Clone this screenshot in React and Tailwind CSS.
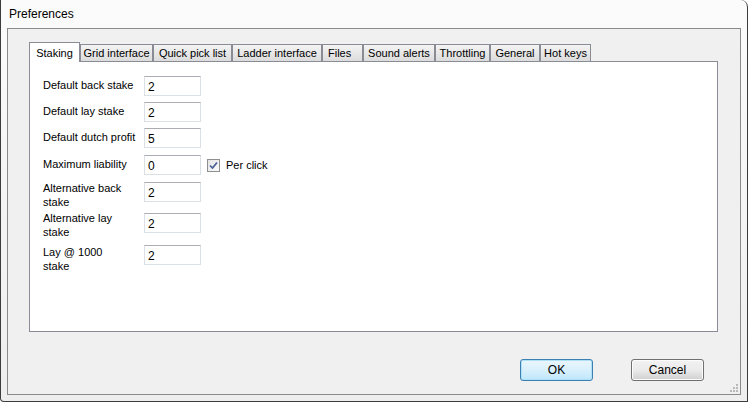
import React from 'react';

const font = { fontFamily: '"Liberation Sans", Arial, sans-serif' };

const tabs = [
  { label: 'Staking', w: 'w-[51px]', active: true },
  { label: 'Grid interface', w: 'w-[73px]' },
  { label: 'Quick pick list', w: 'w-[79px]' },
  { label: 'Ladder interface', w: 'w-[90px]' },
  { label: 'Files', w: 'w-[41px]', left: true },
  { label: 'Sound alerts', w: 'w-[72px]' },
  { label: 'Throttling', w: 'w-[55px]' },
  { label: 'General', w: 'w-[50px]' },
  { label: 'Hot keys', w: 'w-[51px]' },
];

const TabStrip = () => (
  <div className="flex items-end h-[19px]">
    {tabs.map((t) =>
      t.active ? (
        <div
          key={t.label}
          className={`${t.w} h-[20px] -mb-px relative z-10 bg-white border border-b-0 border-[#898c95] text-[11px] leading-[11px] pt-[5px] text-center shrink-0`}
        >
          {t.label}
        </div>
      ) : (
        <div
          key={t.label}
          className={`${t.w} h-[17px] border border-b-0 border-[#898c95] bg-gradient-to-b from-[#f4f4f4] to-[#dcdcdc] text-[11px] leading-[11px] pt-[3px] shrink-0 ${t.left ? 'text-left pl-[5px]' : 'text-center'}`}
        >
          {t.label}
        </div>
      )
    )}
  </div>
);

const Field = ({ value }) => (
  <div className="w-[57px] h-[20px] bg-white border border-[#dbdfe6] border-t-[#abadb3] text-[12px] leading-[12px] pl-[3px] pt-[4px] shrink-0">
    {value}
  </div>
);

// rows keep the height of the text box; two-line labels hang below it
const Row = ({ label, value, className = '', children, labelClass = 'pt-[2px]' }) => (
  <div className={`flex items-start h-[20px] overflow-visible ${className}`}>
    <div className={`w-[101px] text-[11px] leading-[14px] shrink-0 ${labelClass}`}>{label}</div>
    <Field value={value} />
    {children}
  </div>
);

const Checkbox = () => (
  <div className="w-[13px] h-[13px] border border-[#8e8f8f] bg-gradient-to-br from-[#e4e4e4] to-[#fbfbfb] flex items-center justify-center shrink-0">
    <svg width="9" height="9" viewBox="0 0 9 9">
      <path d="M1 4.5 L3.5 7 L8 1.5" fill="none" stroke="#4a5f97" strokeWidth="1.7" />
    </svg>
  </div>
);

const Button = ({ children, primary }) => (
  <div
    className={`w-[73px] h-[22px] rounded-[3px] border flex items-center justify-center text-[12px] ${
      primary
        ? 'border-[#3c7fb1] bg-gradient-to-b from-[#eaf6fd] via-[#d9f0fc] to-[#bee6fd] shadow-[inset_0_0_0_1px_#aee0f8]'
        : 'border-[#707070] bg-gradient-to-b from-[#f2f2f2] via-[#ebebeb] to-[#cfcfcf] shadow-[inset_0_0_0_1px_#fcfcfc]'
    }`}
  >
    {children}
  </div>
);

const Grip = () => (
  <svg className="absolute right-[2px] bottom-[2px]" width="8" height="8" viewBox="0 0 8 8">
    {[
      [6, 0],
      [3, 3],
      [6, 3],
      [0, 6],
      [3, 6],
      [6, 6],
    ].map(([x, y]) => (
      <rect key={`${x}-${y}`} x={x} y={y} width="2" height="2" fill="#b8b8b8" />
    ))}
  </svg>
);

export default function App() {
  return (
    <div
      className="w-[748px] h-[402px] flex flex-col bg-gradient-to-b from-[#fbfbfb] to-[#eeeeee] border-x border-b border-[#3c3c3c] border-t-[#cfcfcf] rounded-tr-[7px] rounded-bl-[4px] text-black overflow-hidden"
      style={font}
    >
      <div className="h-[28px] pl-[8px] pt-[7px] text-[12px] leading-[14px] shrink-0">Preferences</div>
      <div className="flex-1 mx-[6px] mb-[6px] border border-[#8a8a8a] bg-[#f0f0f0] flex flex-col relative">
        <div className="pt-[13px] pl-[21px] pr-[22px]">
          <TabStrip />
          <div className="h-[271px] bg-white border border-[#898c95] pl-[13px] pt-[14px] flex flex-col">
            <Row label="Default back stake" value="2" />
            <Row label="Default lay stake" value="2" className="mt-[6px]" />
            <Row label="Default dutch profit" value="5" className="mt-[6px]" />
            <Row label="Maximum liability" value="0" className="mt-[7px]">
              <div className="flex items-center ml-[6px] h-[20px]">
                <Checkbox />
                <span className="ml-[6px] text-[11px]">Per click</span>
              </div>
            </Row>
            <Row
              label={<>Alternative back<br />stake</>}
              value="2"
              className="mt-[7px]"
              labelClass="-mt-[1px]"
            />
            <Row
              label={<>Alternative lay<br />stake</>}
              value="2"
              className="mt-[11px]"
              labelClass="-mt-[2px]"
            />
            <Row
              label={<>Lay @ 1000<br />stake</>}
              value="2"
              className="mt-[12px]"
              labelClass="pt-0"
            />
          </div>
        </div>
        <div className="flex justify-end gap-[38px] pr-[36px] pt-[27px]">
          <Button primary>OK</Button>
          <Button>Cancel</Button>
        </div>
        <Grip />
      </div>
    </div>
  );
}
